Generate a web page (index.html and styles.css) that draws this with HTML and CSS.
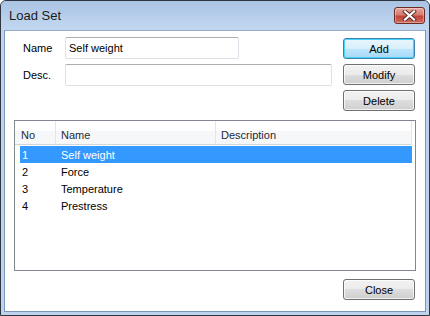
FILE: index.html
```html
<!DOCTYPE html>
<html>
<head>
<meta charset="utf-8">
<link rel="stylesheet" href="styles.css">
</head>
<body>
<div class="window">
  <div class="titlebar">
    <span class="title">Load Set</span>
    <div class="close-btn">
      <svg width="17" height="11" viewBox="0 0 17 11">
        <path d="M4 1.5 L13 9.5 M13 1.5 L4 9.5" stroke="#5a2a26" stroke-width="4" stroke-linecap="square" fill="none"/>
        <path d="M4 1.5 L13 9.5 M13 1.5 L4 9.5" stroke="#ffffff" stroke-width="2.2" stroke-linecap="square" fill="none"/>
      </svg>
    </div>
  </div>
  <div class="client">
    <div class="top">
      <div class="fields">
        <div class="field">
          <span class="label">Name</span>
          <div class="input name-input">Self weight</div>
        </div>
        <div class="field">
          <span class="label">Desc.</span>
          <div class="input desc-input"></div>
        </div>
      </div>
      <div class="buttons">
        <div class="btn default">Add</div>
        <div class="btn">Modify</div>
        <div class="btn">Delete</div>
      </div>
    </div>
    <div class="list">
      <div class="header">
        <div class="hcell c-no">No</div>
        <div class="hcell c-name">Name</div>
        <div class="hcell c-desc">Description</div>
      </div>
      <div class="rows">
        <div class="row selected"><span class="c-no">1</span><span class="c-name">Self weight</span></div>
        <div class="row"><span class="c-no">2</span><span class="c-name">Force</span></div>
        <div class="row"><span class="c-no">3</span><span class="c-name">Temperature</span></div>
        <div class="row"><span class="c-no">4</span><span class="c-name">Prestress</span></div>
      </div>
    </div>
    <div class="footer">
      <div class="btn">Close</div>
    </div>
  </div>
</div>
</body>
</html>
```
FILE: styles.css
```css
* { box-sizing: border-box; }
html, body {
  margin: 0;
  padding: 0;
  background: #ffffff;
}
body {
  font-family: "Liberation Sans", Arial, sans-serif;
  font-size: 11px;
  color: #000;
}
.window {
  width: 430px;
  height: 316px;
  border: 1px solid #2e3440;
  border-radius: 6px 6px 0 0;
  background: #bdd3ee;
  display: flex;
  flex-direction: column;
  overflow: hidden;
}
.titlebar {
  height: 29px;
  flex: none;
  display: flex;
  align-items: flex-start;
  background: linear-gradient(#a9c3e3, #b9d0ec 60%, #c2d7f0);
  border-radius: 5px 5px 0 0;
  padding: 0 4px 0 8px;
}
.title {
  font-size: 13px;
  color: #1b1b1b;
  margin-top: 7px;
}
.close-btn {
  margin-left: auto;
  margin-top: 6px;
  width: 31px;
  height: 17px;
  border: 1px solid #6b2a25;
  border-radius: 3px;
  background: linear-gradient(#e8a89e, #d47c6f 45%, #c2463a 55%, #cf6b5c);
  display: flex;
  align-items: center;
  justify-content: center;
  box-shadow: inset 0 0 0 1px rgba(255,255,255,0.35);
}
.close-btn svg { display: block; }
.client {
  flex: 1;
  margin: 0 3px 3px 3px;
  background: #ffffff;
  border: 1px solid #7d96b6;
  border-top-color: #92aac8;
  padding: 6px 9px 0 9px;
  display: flex;
  flex-direction: column;
}
.top {
  display: flex;
  align-items: flex-start;
}
.fields {
  display: flex;
  flex-direction: column;
  gap: 5px;
  padding-left: 9px;
}
.field {
  display: flex;
  align-items: center;
  height: 22px;
}
.label {
  width: 42px;
  flex: none;
}
.input {
  height: 22px;
  border: 1px solid #dde1e7;
  border-top-color: #abadb3;
  border-radius: 2px;
  background: #fff;
  padding: 0 0 0 3px;
  display: flex;
  align-items: center;
}
.name-input { width: 174px; }
.desc-input { width: 267px; }
.buttons {
  margin-left: auto;
  margin-right: 1px;
  margin-top: 1px;
  display: flex;
  flex-direction: column;
  gap: 5px;
}
.btn {
  width: 72px;
  height: 21px;
  border: 1px solid #707070;
  border-radius: 3px;
  background: linear-gradient(#f2f2f2, #ebebeb 50%, #dddddd 50%, #cfcfcf);
  box-shadow: inset 0 0 0 1px rgba(255,255,255,0.7);
  display: flex;
  align-items: center;
  justify-content: center;
  color: #000;
}
.btn.default {
  border-color: #3c7fb1;
  background: linear-gradient(#eaf6fd, #d9f0fc 50%, #bee6fd 50%, #a7d9f5);
  box-shadow: inset 0 0 0 1px #48d5f9;
}
.list {
  margin-top: 9px;
  height: 151px;
  border: 1px solid #828790;
  background: #fff;
  padding: 0 3px 0 0;
}
.header {
  display: flex;
  height: 24px;
  align-items: stretch;
  background: linear-gradient(#ffffff 40%, #f6f7f8 45%, #f6f7f8);
  border-bottom: 1px solid #d5d5d5;
  color: #1e2a3a;
}
.hcell {
  display: flex;
  align-items: flex-end;
  padding-bottom: 3px;
  border-right: 1px solid #e3e5e8;
}
.header .c-no { width: 41px; padding-left: 6px; }
.header .c-name { width: 160px; padding-left: 5px; }
.header .c-desc { flex: 1; padding-left: 5px; }
.rows {
  padding: 1px 0 0 5px;
}
.row {
  display: flex;
  height: 17px;
  align-items: center;
}
.row.selected {
  background: #3399ff;
  color: #ffffff;
}
.row .c-no { width: 41px; padding-left: 2px; }
.row .c-name { padding-left: 0; }
.footer {
  display: flex;
  justify-content: flex-end;
  padding: 8px 1px 0 0;
}
```
